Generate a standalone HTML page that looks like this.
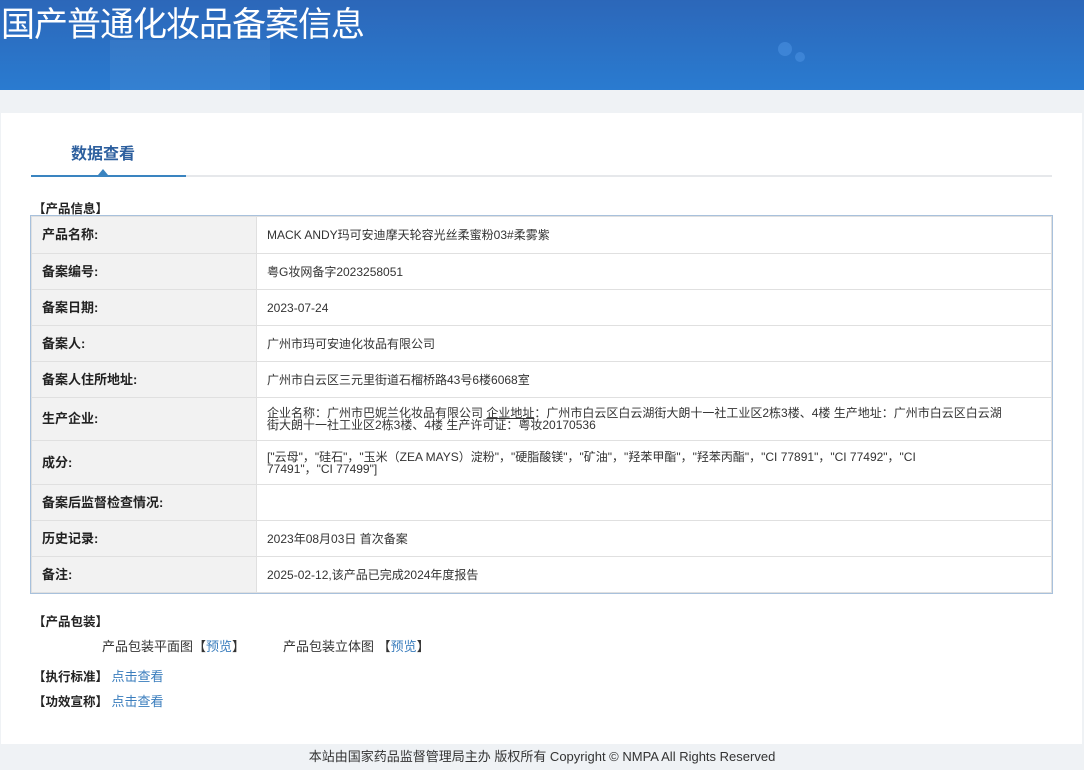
<!DOCTYPE html>
<html><head><meta charset="utf-8"><style>
*{margin:0;padding:0;box-sizing:border-box}
body{width:1084px;height:770px;overflow:hidden;background:#eff2f5;font-family:"Liberation Sans","Noto Sans CJK SC",sans-serif;font-size:12px;color:#333;position:relative}
.hd{position:absolute;left:0;top:0;width:1084px;height:90px;background:linear-gradient(180deg,#2c67b9 0%,#2a7bd0 100%);overflow:hidden}
.hd h1{position:absolute;left:1px;top:3px;color:#fff;font-size:34px;font-weight:normal;letter-spacing:-1px;line-height:44px}
.panel{position:absolute;left:1px;top:113px;width:1081px;height:631px;background:#fff}
.tab{position:absolute;left:71px;top:140px;font-size:16px;font-weight:bold;color:#2d5f9e}
.ln{position:absolute;left:31px;top:175px;width:1021px;height:2px;background:#e6e8eb}
.ln2{position:absolute;left:31px;top:175px;width:155px;height:2px;background:#3a84c0}
.tri{position:absolute;left:98px;top:169px;width:0;height:0;border-left:5px solid transparent;border-right:5px solid transparent;border-bottom:6px solid #3a84c0}
.sec{position:absolute;left:33px;font-weight:bold;font-size:12.5px;color:#222}
table{position:absolute;left:31px;top:216px;width:1021px;border-collapse:collapse;outline:1px solid #a8c1dc}
td{border:1px solid #e0e0e0;padding:0 10px 0 10px;font-size:12px;color:#333;line-height:12px}
td.l{background:#f2f2f2;width:225px;font-weight:bold;font-size:13px;color:#222;padding-left:10px}
a{color:#3a7dbd;text-decoration:none}
.ft{position:absolute;left:0;top:744px;width:1084px;height:26px;text-align:center;line-height:26px;font-size:13px;color:#333}
</style></head><body>
<div class="hd"><h1>国产普通化妆品备案信息</h1>
<div style="position:absolute;left:110px;top:40px;width:160px;height:60px;background:rgba(255,255,255,.05)"></div>
<div style="position:absolute;left:778px;top:42px;width:14px;height:14px;border-radius:50%;background:rgba(80,150,230,.5)"></div>
<div style="position:absolute;left:795px;top:52px;width:10px;height:10px;border-radius:50%;background:rgba(80,150,230,.5)"></div>
</div>
<div class="panel"></div>
<div class="tab">数据查看</div>
<div class="ln"></div><div class="ln2"></div><div class="tri"></div>
<div class="sec" style="top:198px">【产品信息】</div>
<table>
<tr style="height:37px"><td class="l">产品名称:</td><td>MACK ANDY玛可安迪摩天轮容光丝柔蜜粉03#柔雾紫</td></tr>
<tr style="height:36px"><td class="l">备案编号:</td><td>粤G妆网备字2023258051</td></tr>
<tr style="height:36px"><td class="l">备案日期:</td><td>2023-07-24</td></tr>
<tr style="height:36px"><td class="l">备案人:</td><td>广州市玛可安迪化妆品有限公司</td></tr>
<tr style="height:36px"><td class="l">备案人住所地址:</td><td>广州市白云区三元里街道石榴桥路43号6楼6068室</td></tr>
<tr style="height:43px"><td class="l">生产企业:</td><td>企业名称：广州市巴妮兰化妆品有限公司 <u>企业地址</u>：广州市白云区白云湖街大朗十一社工业区2栋3楼、4楼 生产地址：广州市白云区白云湖<br>街大朗十一社工业区2栋3楼、4楼 生产许可证：粤妆20170536</td></tr>
<tr style="height:44px"><td class="l">成分:</td><td>["云母"，"硅石"，"玉米（ZEA MAYS）淀粉"，"硬脂酸镁"，"矿油"，"羟苯甲酯"，"羟苯丙酯"，"CI 77891"，"CI 77492"，"CI<br>77491"，"CI 77499"]</td></tr>
<tr style="height:36px"><td class="l">备案后监督检查情况:</td><td></td></tr>
<tr style="height:36px"><td class="l">历史记录:</td><td>2023年08月03日 首次备案</td></tr>
<tr style="height:36px"><td class="l">备注:</td><td>2025-02-12,该产品已完成2024年度报告</td></tr>
</table>
<div class="sec" style="top:611px">【产品包装】</div>
<div style="position:absolute;left:102px;top:636px;font-size:13px">产品包装平面图【<a>预览</a>】</div>
<div style="position:absolute;left:283px;top:636px;font-size:13px">产品包装立体图 【<a>预览</a>】</div>
<div class="sec" style="top:666px">【执行标准】 <a style="font-weight:normal;font-size:13px">点击查看</a></div>
<div class="sec" style="top:691px">【功效宣称】 <a style="font-weight:normal;font-size:13px">点击查看</a></div>
<div class="ft">本站由国家药品监督管理局主办 版权所有 Copyright © NMPA All Rights Reserved</div>
</body></html>
